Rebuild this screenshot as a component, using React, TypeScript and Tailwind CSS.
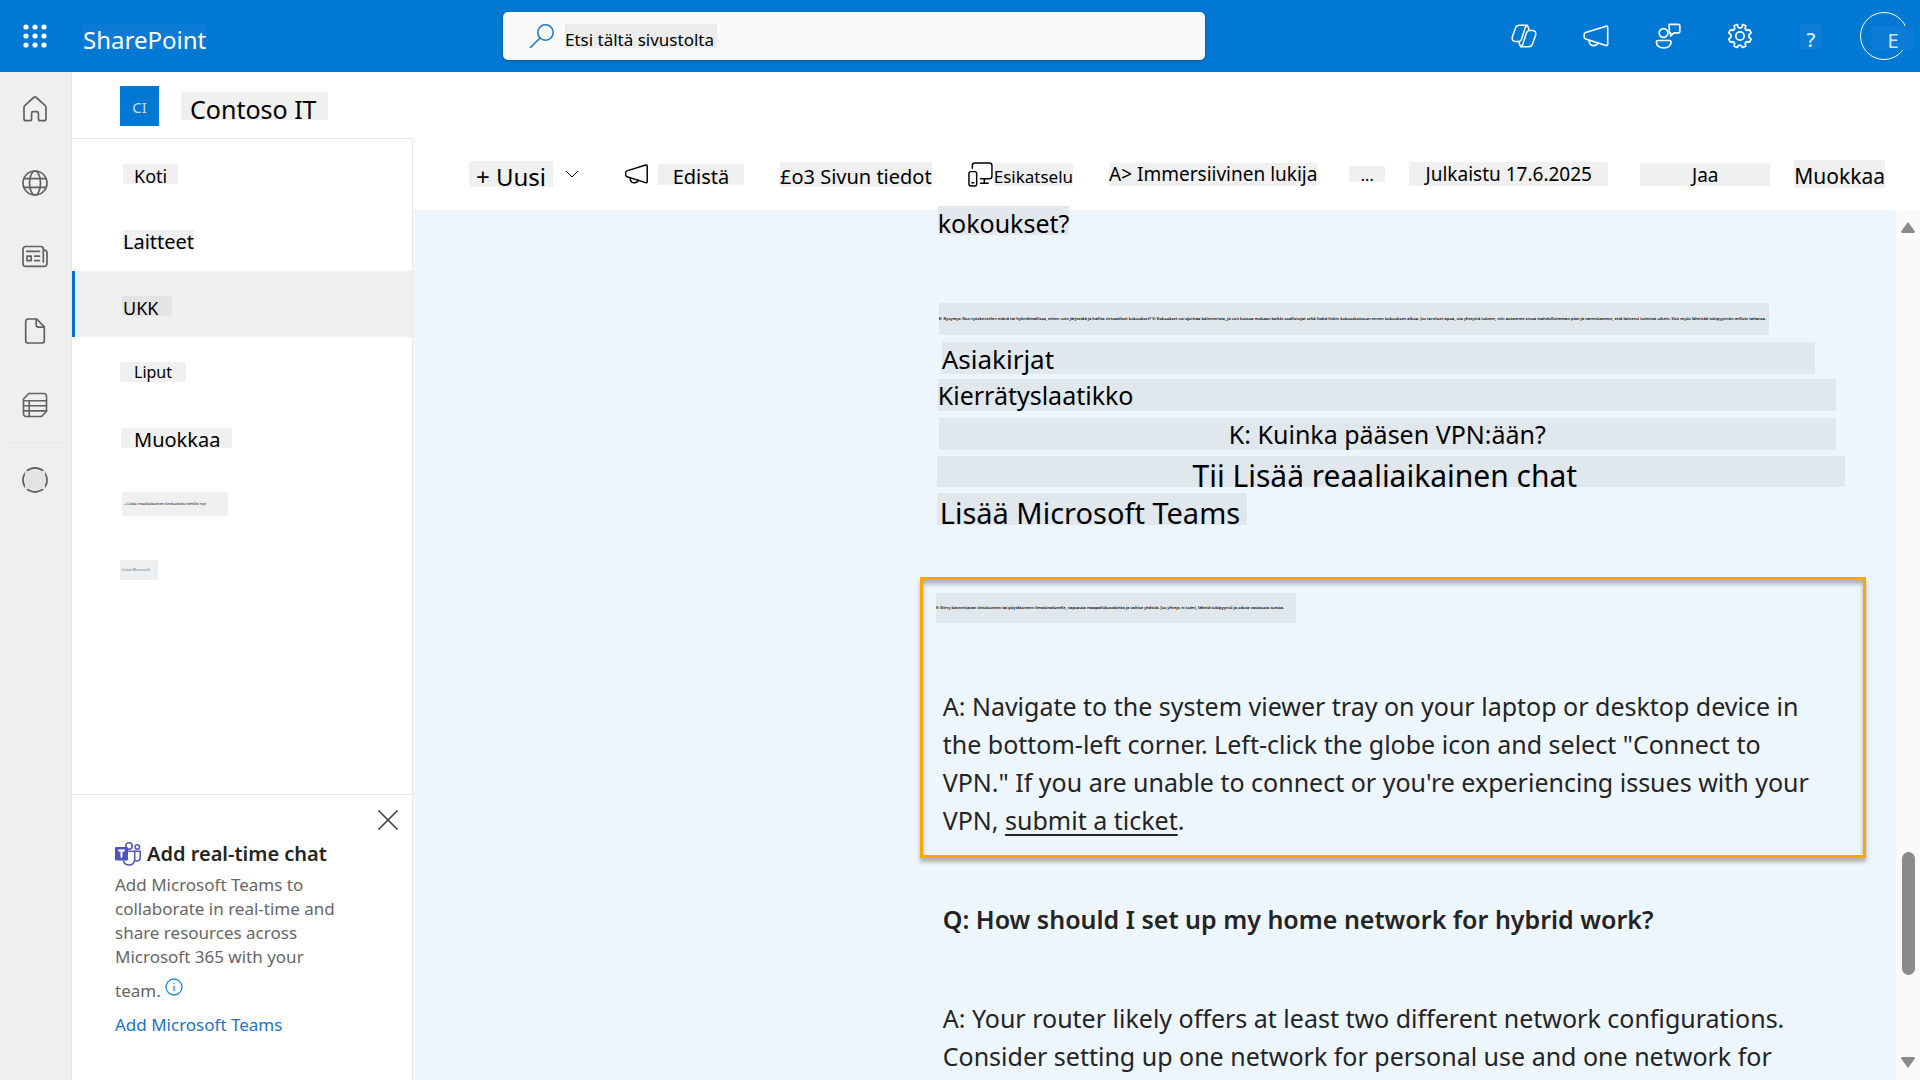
import React from 'react';

type IconProps = { className?: string };

const stroke = {
  fill: 'none',
  stroke: 'currentColor',
  strokeLinecap: 'round' as const,
  strokeLinejoin: 'round' as const,
};

function Waffle({ className }: IconProps) {
  return (
    <svg viewBox="0 0 24 24" className={className} fill="currentColor" aria-hidden="true">
      {[3, 12, 21].map((y) => [3, 12, 21].map((x) => <circle key={`${x}-${y}`} cx={x} cy={y} r="2.6" />))}
    </svg>
  );
}

function SearchIcon({ className }: IconProps) {
  return (
    <svg viewBox="0 0 26 26" className={className} {...stroke} strokeWidth="1.6" aria-hidden="true">
      <circle cx="16.5" cy="9.5" r="7.7" />
      <path d="M11 15 1.5 24.5" />
    </svg>
  );
}

function CopilotIcon({ className }: IconProps) {
  return (
    <svg viewBox="0 0 26 24" className={className} {...stroke} strokeWidth="1.5" aria-hidden="true">
      <path d="M18 5.500 17.200 3C16.800 1.800 15.800 1.200 14.500 1.200H8.300c-2 0-3.300 1-3.900 3L1.500 12.500c-.9 3 .3 5 3 5h3.200c1.500 0 2.300-.7 2.800-2.200l3.500-11c.4-1.500 1.200-2.500 2.500-3" />
      <path d="M8 18.500l.8 2.500c.4 1.200 1.400 1.800 2.700 1.800h6.200c2 0 3.300-1 3.900-3l2.900-8.300c.9-3-.3-5-3-5h-3.200c-1.500 0-2.300.7-2.800 2.200l-3.500 11c-.4 1.500-1.200 2.500-2.500 3" />
    </svg>
  );
}

function Megaphone({ className }: IconProps) {
  return (
    <svg viewBox="0 0 26 24" className={className} {...stroke} strokeWidth="1.6" aria-hidden="true">
      <path d="M23 2.200 2.600 8.600c-.9.3-1.400.9-1.400 1.800v2.800c0 .9.5 1.500 1.400 1.800L23 21.400c1 .3 1.700-.1 1.700-1.200V3.400c0-1.100-.7-1.500-1.700-1.200Z" />
      <path d="M6 16.300c.1 3 1.900 5.300 4.700 5.300 2.100 0 3.700-1.100 4.300-2.800" />
    </svg>
  );
}

function PersonFeedback({ className }: IconProps) {
  return (
    <svg viewBox="0 0 26 26" className={className} {...stroke} strokeWidth="1.7" aria-hidden="true">
      <circle cx="8.500" cy="10" r="4.300" />
      <path d="M3 17.500h11.500c.9 0 1.500.6 1.500 1.500 0 3.800-3 6-7.200 6S1.400 22.800 1.400 19c0-.9.700-1.500 1.600-1.500Z" />
      <path d="M14.200 1.300h9.200c.8 0 1.400.5 1.400 1.300v5.900c0 .8-.6 1.400-1.400 1.400H19L15.600 13V9.900h-1.400V1.300Z" />
    </svg>
  );
}

function Gear({ className }: IconProps) {
  return (
    <svg viewBox="0 0 26 26" className={className} {...stroke} strokeWidth="1.7" aria-hidden="true">
      <path d="M10.400 1.500 11 4.200l2 .9 2-.9.600-2.700 3.300 1.300-.8 2.800 1.500 1.800 2.800-.6 1.800 3-2.200 1.900v2.600l2.200 1.900-1.800 3-2.800-.6-1.500 1.800.8 2.800-3.300 1.300-1.900-2.200h-2.400L10.400 24.500l-3.300-1.300.6-2.800-1.500-1.800-2.800.6-1.700-3 2.200-1.900v-2.600L1.700 9.800l1.700-3 2.800.6 1.500-1.800-.6-2.800Z" />
      <circle cx="13" cy="13" r="4.200" />
    </svg>
  );
}

function HomeIcon({ className }: IconProps) {
  return (
    <svg viewBox="0 0 26 26" className={className} {...stroke} strokeWidth="1.7" aria-hidden="true">
      <path d="M11.700 1.500 3 9.300c-.7.600-1 1.300-1 2.200v11.200c0 1.200.8 2 2 2h3.600c1.200 0 2-.8 2-2v-5.400c0-1 .6-1.600 1.600-1.600h3.600c1 0 1.600.6 1.600 1.600v5.400c0 1.200.8 2 2 2H22c1.200 0 2-.8 2-2V11.500c0-.9-.3-1.600-1-2.200l-8.700-7.800c-.8-.7-1.800-.7-2.600 0Z" />
    </svg>
  );
}

function GlobeIcon({ className }: IconProps) {
  return (
    <svg viewBox="0 0 26 26" className={className} {...stroke} strokeWidth="1.7" aria-hidden="true">
      <circle cx="13" cy="13" r="12" />
      <ellipse cx="13" cy="13" rx="5.500" ry="12" />
      <path d="M2 8.700h22M2 17.300h22" />
    </svg>
  );
}

function NewsIcon({ className }: IconProps) {
  return (
    <svg viewBox="0 0 26 26" className={className} {...stroke} strokeWidth="1.7" aria-hidden="true">
      <path d="M21.300 6V5C21.300 3.500 20.300 2.500 18.800 2.500H3.700C2.100 2.500 1 3.600 1 5.100v14.600c0 1.600 1.100 2.700 2.700 2.700h17.800c2 0 3.500-1.500 3.500-3.500V8.900c0-1.500-1-2.500-2.400-2.700M21.300 6.400v11.500" />
      <path d="M4.800 7.400h12.700M12.700 12.200h4.800M12.700 16.600h4.800M5 12.200h4.200v4.400H5Z" />
    </svg>
  );
}

function DocIcon({ className }: IconProps) {
  return (
    <svg viewBox="0 0 26 26" className={className} {...stroke} strokeWidth="1.7" aria-hidden="true">
      <path d="M14.700 1H6.300C4.700 1 3.700 2 3.700 3.600v18.800C3.700 24 4.700 25 6.300 25h13.400c1.600 0 2.600-1 2.600-2.600V8.800L14.700 1Z" />
      <path d="M14.200 1.500v5.300c0 1.500.9 2.400 2.400 2.400h5.200" />
    </svg>
  );
}

function ListIcon({ className }: IconProps) {
  return (
    <svg viewBox="0 0 26 26" className={className} {...stroke} strokeWidth="1.6" aria-hidden="true">
      <path d="M6.800 1.500h15c1.700 0 2.700 1 2.700 2.700v15l-5 5.300H4.200c-1.700 0-2.700-1-2.700-2.700V7Z" />
      <path d="M1.500 8.700h23M1.500 13.700h23M1.500 18.900h23M7.200 8.700v15.800" />
    </svg>
  );
}

function CreateIcon({ className }: IconProps) {
  return (
    <svg viewBox="0 0 26 26" className={className} {...stroke} strokeWidth="1.8" aria-hidden="true">
      <circle cx="13" cy="13" r="12" />
      <path d="M3 4h20v18H3Z" fill="#e3e3e3" stroke="none" />
    </svg>
  );
}

function DevicesIcon({ className }: IconProps) {
  return (
    <svg viewBox="0 0 26 26" className={className} {...stroke} strokeWidth="1.5" aria-hidden="true">
      <path d="M4.500 6.500V3.700C4.500 2 5.500 1 7.200 1h15c1.700 0 2.700 1 2.700 2.700v11c0 1.700-1 2.700-2.700 2.700H13M17 17.500V22M13 22h8" />
      <rect x="1" y="10" width="8" height="15" rx="2" />
      <path d="M4 21.500h2" />
    </svg>
  );
}

function TeamsIcon({ className }: IconProps) {
  return (
    <svg viewBox="0 0 26 24" className={className} fill="none" stroke="#5558b4" strokeWidth="1.6" aria-hidden="true">
      <circle cx="14" cy="4" r="3.200" />
      <circle cx="22.300" cy="5" r="2.200" />
      <path d="M13 9.300h6.700v8c0 3.300-2.300 5.700-5.500 5.700-2.900 0-5.300-1.900-5.900-4.600" />
      <path d="M19.700 9.300h5.500v6.200c0 2-1.300 3.500-3.200 3.500-.9 0-1.600-.2-2.200-.6" />
      <rect x="0" y="5" width="13" height="13.500" rx="1" fill="#4b53bc" stroke="none" />
      <path d="M3.200 8.500h6.600M6.500 8.500v7" stroke="#fff" strokeWidth="2" />
    </svg>
  );
}

const railItems = [
  { label: 'Home', Icon: HomeIcon },
  { label: 'Sites', Icon: GlobeIcon },
  { label: 'News', Icon: NewsIcon },
  { label: 'Files', Icon: DocIcon },
  { label: 'Lists', Icon: ListIcon },
];

const navItems = [
  { text: 'Koti', item: 'pl-[51px]', chip: 'h-5 w-[55px] pl-[11px] text-lg leading-6 bg-[#f0f0f0]' },
  { text: 'Laitteet', item: 'pl-[51px]', chip: 'h-5 w-[71px] text-xl leading-6 bg-[#f0f0f0]' },
  { text: 'UKK', item: 'bg-[#efefef] border-l-[3px] border-[#0078d4] pl-[47px]', chip: 'h-5 w-[50px] pl-px text-lg leading-6 bg-[#e4e4e4]' },
  { text: 'Liput', item: 'pl-12', chip: 'h-5 w-[66px] pl-3.5 text-base leading-5 bg-[#f0f0f0]' },
  { text: 'Muokkaa', item: 'pl-[49px]', chip: 'h-5 w-[111px] pl-[13px] text-xl leading-6 bg-[#f0f0f0]' },
  { text: '+ Lisää reaaliaikainen keskustelu tiimille nyt', item: 'pl-[50px]', chip: 'h-6 w-[106px] overflow-hidden pl-0.5 text-[4px] leading-6 bg-[#f0f0f0]' },
  { text: 'Lisää Microsoft', item: 'pl-12', chip: 'h-5 w-[38px] overflow-hidden pl-0.5 text-[4px] leading-5 text-gray-500 bg-[#eeeff1]' },
];

const longQuestion =
  'K: Kysymys: Kun työskentelen etänä tai hybridimallissa, miten voin järjestää ja hallita virtuaaliset kokoukset? V: Kokoukset voi ajoittaa kalenterista, ja voit kutsua mukaan kaikki osallistujat sekä lisätä linkin kokouskutsuun ennen kokouksen alkua. Jos tarvitset apua, ota yhteyttä tukeen, niin autamme sinua mahdollisimman pian ja varmistamme, että laitteesi toimivat oikein. Voit myös lähettää tukipyynnön milloin tahansa.';
const shortAnswer =
  'V: Siirry kannettavan tietokoneen tai pöytäkoneen ilmaisinalueelle, napsauta maapallokuvaketta ja valitse yhdistä. Jos yhteys ei toimi, lähetä tukipyyntö ja odota vastausta tuesta.';

function TopBar() {
  return (
    <header className="flex h-[72px] shrink-0 items-center bg-[#0078d4] text-white">
      <div className="flex w-[503px] shrink-0 items-center">
        <button type="button" aria-label="App launcher" className="flex w-[70px] justify-center">
          <Waffle className="size-6" />
        </button>
        <a href="#" className="ml-[13px] h-[25px] bg-[#0b7bd5] text-2xl leading-8">SharePoint</a>
      </div>
      <div className="flex h-12 w-[702px] items-center rounded-[5px] bg-[#fafafa] pl-[26px] shadow-[0_1px_3px_rgba(0,0,0,0.3)]">
        <SearchIcon className="size-[26px] shrink-0 text-[#1a78cc]" />
        <input
          type="text"
          aria-label="Etsi tältä sivustolta"
          defaultValue="Etsi tältä sivustolta"
          className="ml-2.5 h-6 w-[152px] bg-[#ececec] pt-1.5 text-[17px] leading-5 text-black outline-none"
        />
      </div>
      <div className="flex flex-1 items-center justify-end">
        <button type="button" aria-label="Copilot" className="flex w-[72px] justify-center"><CopilotIcon className="h-6 w-[26px]" /></button>
        <button type="button" aria-label="Promote" className="flex w-[72px] justify-center"><Megaphone className="h-6 w-[26px]" /></button>
        <button type="button" aria-label="Feedback" className="flex w-[72px] justify-center"><PersonFeedback className="size-[26px]" /></button>
        <button type="button" aria-label="Settings" className="flex w-[72px] justify-center"><Gear className="size-[26px]" /></button>
        <button type="button" aria-label="Help" className="flex w-[72px] justify-center pr-0.5">
          <span className="h-[25px] w-[22px] bg-[#0f7dd6] text-xl leading-8 font-medium text-[#dcecf9]">?</span>
        </button>
        <button type="button" aria-label="Account" className="relative flex w-[72px] justify-center">
          <span className="size-12 rounded-full border border-white" />
          <span className="absolute top-3.5 right-1.5 h-6 w-[42px] bg-[#0b7bd5] text-center text-xl leading-[30px] text-[#cfe5f7]">E</span>
        </button>
      </div>
    </header>
  );
}

function Rail() {
  return (
    <nav aria-label="Global" className="flex w-[72px] shrink-0 flex-col border-r border-[#e6e6e6] bg-[#efefef] text-[#616161]">
      {railItems.map(({ label, Icon }) => (
        <a key={label} href="#" aria-label={label} className="flex h-[74px] items-center justify-center pr-px">
          <Icon className="size-[26px]" />
        </a>
      ))}
      <div className="mx-[7px] border-t border-[#e8e8e8]" />
      <a href="#" aria-label="Create" className="flex h-[74px] items-center justify-center pr-px">
        <CreateIcon className="size-[26px]" />
      </a>
    </nav>
  );
}

function SideNav() {
  return (
    <aside className="flex w-[341px] shrink-0 flex-col border-t border-r border-[#e8e8e8] bg-white">
      <ul>
        {navItems.map(({ text, item, chip }) => (
          <li key={text}>
            <a href="#" className={`flex h-[66px] items-center pt-1 ${item}`}>
              <span className={`block whitespace-nowrap ${chip}`}>{text}</span>
            </a>
          </li>
        ))}
      </ul>
      <section className="mt-auto border-t border-[#e8e8e8] pr-3.5 pb-[43px] pl-[43px]">
        <div className="flex justify-end pt-[15px]">
          <button type="button" aria-label="Close" className="text-[#424242]">
            <svg viewBox="0 0 20 20" className="size-5" {...stroke} strokeWidth="1.7" aria-hidden="true">
              <path d="m1 1 18 18M19 1 1 19" />
            </svg>
          </button>
        </div>
        <h2 className="mt-2.5 flex items-center gap-1.5 text-xl leading-7 font-semibold text-[#242424]">
          <TeamsIcon className="h-6 w-[26px]" />
          Add real-time chat
        </h2>
        <p className="mt-[5px] w-56 text-[17px] leading-6 text-[#666]">
          Add Microsoft Teams to collaborate in real-time and share resources across Microsoft 365 with your
          <span className="flex h-9 items-center gap-1">
            <span className="pt-2">team.</span>
            <svg viewBox="0 0 18 18" className="size-[18px]" fill="none" stroke="#1a86d9" strokeWidth="1.3" aria-hidden="true">
              <circle cx="9" cy="9" r="8" />
              <path d="M9 8v5M9 5v1.300" />
            </svg>
          </span>
        </p>
        <a href="#" className="mt-2 block text-[17px] leading-6 text-[#1a73c4]">Add Microsoft Teams</a>
      </section>
    </aside>
  );
}

function CommandBar() {
  return (
    <div className="flex h-[72px] shrink-0 items-center justify-between pr-[35px] pl-14 whitespace-nowrap">
      <div className="flex items-center gap-9">
        <button type="button" className="mr-2.5 flex items-center">
          <span className="block h-[26px] w-[84px] bg-[#f0f0f0] pl-[7px] text-left text-2xl leading-8">+ Uusi</span>
          <svg viewBox="0 0 12 7" className="ml-[13px] h-[7px] w-3" {...stroke} aria-hidden="true"><path d="m.5.5 5.500 5.500 5.500-5.500" /></svg>
        </button>
        <button type="button" className="flex items-center gap-[9px]">
          <Megaphone className="h-[22px] w-[25px]" />
          <span className="block h-[21px] w-[86px] bg-[#f0f0f0] text-xl leading-[26px]">Edistä</span>
        </button>
        <button type="button" className="block h-[25px] bg-[#f0f0f0] text-xl leading-[30px]">£o3 Sivun tiedot</button>
        <button type="button" className="flex items-center gap-px">
          <DevicesIcon className="size-[25px]" />
          <span className="block h-[23px] bg-[#f0f0f0] text-[17px] leading-7">Esikatselu</span>
        </button>
        <button type="button" className="block h-[23px] bg-[#f0f0f0] text-[19px] leading-[22px]">A&gt; Immersiivinen lukija</button>
      </div>
      <div className="flex items-center gap-6">
        <button type="button" className="block h-4 w-9 bg-[#f0f0f0] text-base leading-[18px]">...</button>
        <span className="block h-6 w-[199px] bg-[#f0f0f0] text-center text-[19px] leading-6">Julkaistu 17.6.2025</span>
        <button type="button" className="ml-2 block h-[23px] w-[130px] bg-[#f0f0f0] text-[19px] leading-6">Jaa</button>
        <button type="button" className="block h-7 bg-[#f0f0f0] text-[21px] leading-8">Muokkaa</button>
      </div>
    </div>
  );
}

function Article() {
  return (
    <article className="ml-auto w-[65.2%] pr-[3px] text-[25px]">
      <p className="-mt-1 ml-[18px] h-[29px] w-[131px] bg-[#e3e8ee] leading-[34px]">kokoukset?</p>
      <p className="mt-[68px] mr-[97px] ml-[19px] h-8 overflow-hidden bg-[#e0e7ed] text-[4px] leading-8 font-semibold whitespace-nowrap">
        {longQuestion}
      </p>
      <p className="mt-[7px] mr-[51px] ml-[22px] h-8 bg-[#e0e7ed] text-[26px] leading-[34px]">Asiakirjat</p>
      <p className="mt-[5px] mr-[30px] ml-[18px] h-8 bg-[#e0e7ed] leading-8">Kierrätyslaatikko</p>
      <p className="mt-[7px] mr-[30px] ml-[19px] h-8 bg-[#e0e7ed] text-center leading-8">K: Kuinka pääsen VPN:ään?</p>
      <p className="mt-1.5 mr-[21px] ml-[17px] h-[31px] bg-[#e0e7ed] pr-3 text-center text-[30px] leading-10">Tii Lisää reaaliaikainen chat</p>
      <p className="mt-1.5 ml-[17px] h-8 w-[310px] bg-[#e0e7ed] pl-[3px] text-[29px] leading-10">Lisää Microsoft Teams</p>
      <section className="mt-[52px] border-[3px] border-[#f7a80d] px-5 pt-[13px] pb-4 shadow-[0_4px_4px_rgba(0,0,0,0.28),inset_0_4px_4px_rgba(0,0,0,0.28)]">
        <p className="-ml-[7px] h-[30px] w-[360px] overflow-hidden bg-[#e0e7ed] text-[4px] leading-[30px] font-semibold whitespace-nowrap">
          {shortAnswer}
        </p>
        <p className="mt-16 max-w-[885px] leading-[38px] text-[#242424]">
          A: Navigate to the system viewer tray on your laptop or desktop device in the bottom-left corner. Left-click
          the globe icon and select "Connect to VPN." If you are unable to connect or you're experiencing issues with
          your VPN, <a href="#" className="underline decoration-2 underline-offset-4">submit a ticket</a>.
        </p>
      </section>
      <h3 className="mt-[42px] ml-[23px] leading-[38px] font-semibold text-[#242424]">
        Q: How should I set up my home network for hybrid work?
      </h3>
      <p className="mt-[61px] ml-[23px] max-w-[885px] leading-[38px] text-[#242424]">
        A: Your router likely offers at least two different network configurations. Consider setting up one network for
        personal use and one network for
      </p>
    </article>
  );
}

function ScrollBar() {
  return (
    <div aria-hidden="true" className="flex w-6 shrink-0 flex-col items-center bg-[#fafafa] py-3 text-[#8a8a8a]">
      <svg viewBox="0 0 14 11" className="h-[11px] w-3.5 fill-current"><path d="M7 0 14 9.500 13 11H1L0 9.500Z" /></svg>
      <div className="grow-[15]" />
      <div className="h-[123px] w-[13px] rounded-full bg-[#8a8a8a]" />
      <div className="grow-[2]" />
      <svg viewBox="0 0 14 11" className="h-[11px] w-3.5 fill-current"><path d="M7 11 0 1.500 1 0h12l1 1.500Z" /></svg>
    </div>
  );
}

export default function App() {
  return (
    <div className="flex h-screen flex-col overflow-hidden bg-white font-['Noto_Sans',sans-serif] text-black">
      <TopBar />
      <div className="flex min-h-0 flex-1">
        <Rail />
        <div className="flex min-w-0 flex-1 flex-col">
          <div className="flex h-[66px] shrink-0 items-center pt-px pl-12">
            <div className="h-10 w-[39px] bg-[#0078d4] text-center text-[15px] leading-[42px] text-[#c4e0f6]">CI</div>
            <h1 className="ml-[22px] h-7 w-[147px] bg-[#f0f0f0] pl-[9px] text-[25px] leading-[34px]">Contoso IT</h1>
          </div>
          <div className="flex min-h-0 flex-1">
            <SideNav />
            <main className="flex min-w-0 flex-1 flex-col">
              <CommandBar />
              <div className="flex min-h-0 flex-1">
                <div className="min-w-0 flex-1 bg-[#edf5fd] pr-[27px]">
                  <Article />
                </div>
                <ScrollBar />
              </div>
            </main>
          </div>
        </div>
      </div>
    </div>
  );
}
